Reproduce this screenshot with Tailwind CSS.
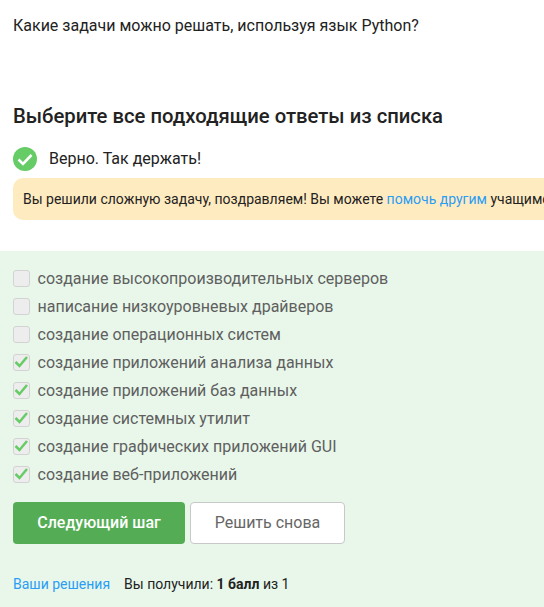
<!DOCTYPE html>
<html lang="ru">
<head>
    <meta charset="UTF-8">
    <title>Какие задачи можно решать</title>
    <script src="https://cdn.jsdelivr.net/npm/@tailwindcss/browser@4"></script>
</head>
<body class="w-[544px] h-[607px] overflow-hidden bg-white font-['Roboto',sans-serif] text-[#222222]">

    <div class="px-[13px] pt-[16px]">
        <p class="text-[16px] leading-[19px] text-[#222222]">Какие задачи можно решать, используя язык Python?</p>
        <h2 class="mt-[69px] text-[20.25px] leading-[24px] font-medium text-[#222222]">Выберите все подходящие ответы из списка</h2>

        <div class="mt-[19px] flex items-center">
            <svg class="w-[24px] h-[24px] shrink-0" viewBox="0 0 24 24">
                <circle cx="12" cy="12" r="12" fill="#66cc66"/>
                <path d="M5.5 12.5l4.5 4.5 8.5-9" fill="none" stroke="#ffffff" stroke-width="2.6"/>
            </svg>
            <span class="ml-[12px] text-[16px] leading-[24px] text-[#222222]">Верно. Так держать!</span>
        </div>

        <div class="mt-[7px] h-[42px] w-[600px] flex items-center pl-[10px] rounded-l-[10px] bg-[#ffebc0] text-[14px] whitespace-nowrap text-[#222222]">
            <span>Вы решили сложную задачу, поздравляем! Вы можете <a class="text-[#2a9df4]">помочь другим</a> учащимся</span>
        </div>
    </div>

    <div class="mt-[31px] h-[356px] bg-[#e8f7ea] px-[13px] pt-[13px]">
        <ul class="flex flex-col text-[16px] leading-[28px] text-[#5f5f5f]">
            <li class="flex items-center h-[28px]">
                <span class="w-[17px] h-[17px] rounded-[3px] border border-[#d3d3d3] bg-[#ededed]"></span>
                <span class="ml-[7.5px] pt-[2px]">создание высокопроизводительных серверов</span>
            </li>
            <li class="flex items-center h-[28px]">
                <span class="w-[17px] h-[17px] rounded-[3px] border border-[#d3d3d3] bg-[#ededed]"></span>
                <span class="ml-[7.5px] pt-[2px]">написание низкоуровневых драйверов</span>
            </li>
            <li class="flex items-center h-[28px]">
                <span class="w-[17px] h-[17px] rounded-[3px] border border-[#d3d3d3] bg-[#ededed]"></span>
                <span class="ml-[7.5px] pt-[2px]">создание операционных систем</span>
            </li>
            <li class="flex items-center h-[28px]">
                <span class="w-[17px] h-[17px] rounded-[3px] border border-[#d3d3d3] bg-[#ededed]">
                    <svg class="w-[15px] h-[15px]" viewBox="0 0 15 15"><path d="M1.5 7l4 4 7.5-9" fill="none" stroke="#66cc66" stroke-width="2.5"/></svg>
                </span>
                <span class="ml-[7.5px] pt-[2px]">создание приложений анализа данных</span>
            </li>
            <li class="flex items-center h-[28px]">
                <span class="w-[17px] h-[17px] rounded-[3px] border border-[#d3d3d3] bg-[#ededed]">
                    <svg class="w-[15px] h-[15px]" viewBox="0 0 15 15"><path d="M1.5 7l4 4 7.5-9" fill="none" stroke="#66cc66" stroke-width="2.5"/></svg>
                </span>
                <span class="ml-[7.5px] pt-[2px]">создание приложений баз данных</span>
            </li>
            <li class="flex items-center h-[28px]">
                <span class="w-[17px] h-[17px] rounded-[3px] border border-[#d3d3d3] bg-[#ededed]">
                    <svg class="w-[15px] h-[15px]" viewBox="0 0 15 15"><path d="M1.5 7l4 4 7.5-9" fill="none" stroke="#66cc66" stroke-width="2.5"/></svg>
                </span>
                <span class="ml-[7.5px] pt-[2px]">создание системных утилит</span>
            </li>
            <li class="flex items-center h-[28px]">
                <span class="w-[17px] h-[17px] rounded-[3px] border border-[#d3d3d3] bg-[#ededed]">
                    <svg class="w-[15px] h-[15px]" viewBox="0 0 15 15"><path d="M1.5 7l4 4 7.5-9" fill="none" stroke="#66cc66" stroke-width="2.5"/></svg>
                </span>
                <span class="ml-[7.5px] pt-[2px]">создание графических приложений GUI</span>
            </li>
            <li class="flex items-center h-[28px]">
                <span class="w-[17px] h-[17px] rounded-[3px] border border-[#d3d3d3] bg-[#ededed]">
                    <svg class="w-[15px] h-[15px]" viewBox="0 0 15 15"><path d="M1.5 7l4 4 7.5-9" fill="none" stroke="#66cc66" stroke-width="2.5"/></svg>
                </span>
                <span class="ml-[7.5px] pt-[2px]">создание веб-приложений</span>
            </li>
        </ul>

        <div class="mt-[14px] flex gap-[5px]">
            <button class="w-[172px] h-[42px] rounded-[4px] bg-[#54ad54] text-white text-[16px] font-medium">Следующий шаг</button>
            <button class="w-[155px] h-[42px] rounded-[4px] bg-white border border-[#c8c8c8] text-[#666666] text-[16px]">Решить снова</button>
        </div>

        <div class="mt-[32px] flex text-[14px] leading-[17px]">
            <a class="text-[#2a9df4]">Ваши решения</a>
            <span class="ml-[14px] text-[#222222]">Вы получили: <b class="font-bold">1 балл</b> из 1</span>
        </div>
    </div>

</body>
</html>
